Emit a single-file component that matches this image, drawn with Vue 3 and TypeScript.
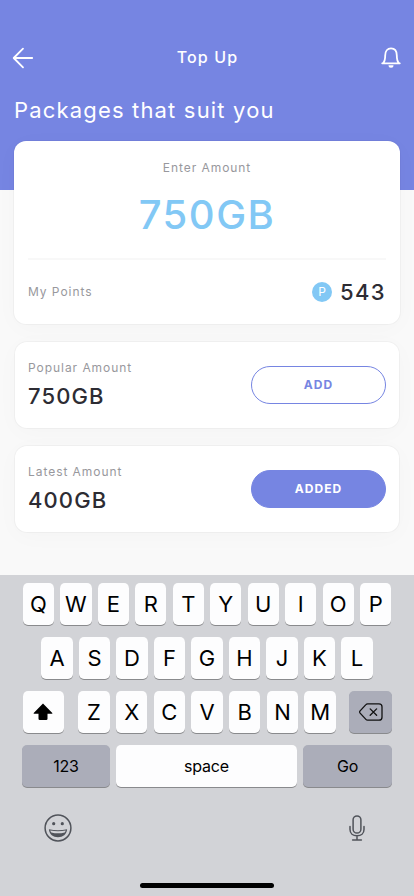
<script setup lang="ts">
interface Package {
  label: string
  amount: string
  added: boolean
}

const packages: Package[] = [
  { label: 'Popular Amount', amount: '750GB', added: false },
  { label: 'Latest Amount', amount: '400GB', added: true },
]

const topRow: string[] = 'QWERTYUIOP'.split('')
const homeRow: string[] = 'ASDFGHJKL'.split('')
const bottomRow: string[] = 'ZXCVBNM'.split('')
</script>

<template>
  <div class="screen">
    <header class="hero">
      <nav class="nav">
        <svg class="icon" width="22" height="22" viewBox="0 0 22 22">
          <path d="M11 1.600 1.700 11l9.300 9.400M1.800 11h18.400" fill="none" stroke="#fff" stroke-width="1.800" stroke-linecap="round" stroke-linejoin="round" />
        </svg>
        <h1 class="title">Top Up</h1>
        <svg class="icon bell" width="20" height="22" viewBox="0 0 20 22">
          <path d="M1.200 16.300h17.600M2 16.100c1.600-1.400 2.200-3.500 2.200-7.600C4.200 4 6.500 1.400 10 1.400S15.800 4 15.800 8.500c0 4.100.6 6.200 2.200 7.600" fill="none" stroke="#fff" stroke-width="1.800" stroke-linecap="round" stroke-linejoin="round" />
          <path d="M7.500 18.300h5a2.500 2.500 0 0 1-5 0z" fill="#fff" />
        </svg>
      </nav>
      <h2 class="headline">Packages that suit you</h2>
    </header>

    <main class="content">
      <section class="card balance">
        <div class="label enter">Enter Amount</div>
        <div class="amount">750GB</div>
        <div class="points">
          <span class="label">My Points</span>
          <span class="score"><i class="coin">P</i><b class="value">543</b></span>
        </div>
      </section>

      <section v-for="item in packages" :key="item.label" class="card package">
        <div>
          <div class="label">{{ item.label }}</div>
          <div class="value size">{{ item.amount }}</div>
        </div>
        <button class="action" :class="{ filled: item.added }">{{ item.added ? 'ADDED' : 'ADD' }}</button>
      </section>
    </main>

    <div class="keyboard">
      <div class="row">
        <span v-for="k in topRow" :key="k" class="key">{{ k }}</span>
      </div>
      <div class="row">
        <span v-for="k in homeRow" :key="k" class="key">{{ k }}</span>
      </div>
      <div class="row spread">
        <span class="key shift">
          <svg width="20" height="18" viewBox="0 0 20 18">
            <path d="M10 .6 19.300 10q.5.700-.4.700H14.500v5q0 1.300-1.300 1.300H6.800q-1.300 0-1.300-1.300v-5H1.100Q.2 10.700.7 10z" fill="#000" />
          </svg>
        </span>
        <div class="group">
          <span v-for="k in bottomRow" :key="k" class="key">{{ k }}</span>
        </div>
        <span class="key dark delete">
          <svg width="24" height="18" viewBox="0 0 24 18">
            <path d="M8.600.8H20q3 0 3 3v10.400q0 3-3 3H8.600q-1 0-1.700-.8L1.100 10.100q-.9-1.100 0-2.200L6.900 1.600Q7.600.8 8.600.8zM11.200 5.900l6.400 6.300M17.600 5.900l-6.400 6.300" fill="none" stroke="#111" stroke-width="1.300" stroke-linecap="round" stroke-linejoin="round" />
          </svg>
        </span>
      </div>
      <div class="row spread">
        <span class="key word dark digits">123</span>
        <span class="key word space">space</span>
        <span class="key word dark go">Go</span>
      </div>
      <div class="tools">
        <svg width="28" height="28" viewBox="0 0 28 28">
          <circle cx="14" cy="14" r="12.900" fill="none" stroke="#50535a" stroke-width="1.500" />
          <circle cx="9.700" cy="9.700" r="1.600" fill="#50535a" />
          <circle cx="18.300" cy="9.700" r="1.600" fill="#50535a" />
          <path d="M4.900 15.300q9.100 1.900 18.200 0c-.3 5-4.300 8-9.100 8s-8.800-3-9.100-8z" fill="#50535a" />
          <path d="M6.200 16.600q7.800 1.300 15.600 0-.3 1.100-1.100 1.800-6.700 1.900-13.400 0-.8-.7-1.100-1.800z" fill="#d2d3d7" />
        </svg>
        <svg width="16" height="26" viewBox="0 0 16 26">
          <rect x="4.100" y=".9" width="7.800" height="17.200" rx="3.900" fill="none" stroke="#50535a" stroke-width="1.500" />
          <path d="M1 11.500v3c0 4 3 6.300 7 6.300s7-2.300 7-6.300v-3M8 20.800v4M3.600 24.900h8.800" fill="none" stroke="#50535a" stroke-width="1.500" stroke-linecap="round" />
        </svg>
      </div>
      <div class="home"></div>
    </div>
  </div>
</template>

<style>
body {
  margin: 0;
}
</style>

<style scoped>
.screen {
  width: 414px;
  height: 896px;
  display: flex;
  flex-direction: column;
  overflow: hidden;
  background: #f9f9f9;
  font-family: Inter, 'Liberation Sans', sans-serif;
  color: #2d2c33;
}
.hero {
  flex: none;
  box-sizing: border-box;
  height: 190px;
  padding: 46px 13px 0 12px;
  background: #7685e2;
  color: #fff;
}
.nav {
  height: 24px;
  display: flex;
  align-items: center;
  justify-content: space-between;
}
.icon {
  display: block;
}
.title {
  margin: -2px 0 0;
  font-size: 16px;
  line-height: 24px;
  font-weight: 500;
  letter-spacing: 1.1px;
}
.headline {
  margin: 25px 0 0 2px;
  font-size: 22px;
  line-height: 30px;
  font-weight: 400;
  letter-spacing: 1.17px;
}
.content {
  flex: 1;
  display: flex;
  flex-direction: column;
  gap: 18px;
  margin-top: -49px;
  padding: 0 15px;
}
.card {
  box-sizing: border-box;
  border-radius: 12px;
  background: #fff;
  box-shadow: 0 0 0 1px rgba(0, 0, 0, 0.03), 0 4px 24px rgba(0, 0, 0, 0.025);
}
.balance {
  height: 183px;
  margin: 0 -1px;
  padding: 0 14px;
}
.label {
  font-size: 12px;
  line-height: 16px;
  letter-spacing: 0.95px;
  color: #98989d;
}
.enter {
  padding-top: 19px;
  text-align: center;
}
.amount {
  height: 82px;
  border-bottom: 2px solid #f8f8f8;
  font-size: 40px;
  line-height: 78px;
  font-weight: 500;
  letter-spacing: 1.5px;
  text-align: center;
  color: #82c8f5;
}
.points {
  height: 64px;
  display: flex;
  align-items: center;
  justify-content: space-between;
}
.score {
  display: flex;
  align-items: center;
  gap: 8px;
}
.coin {
  width: 20px;
  height: 20px;
  border-radius: 50%;
  background: #82c8f5;
  color: #fff;
  font-size: 12px;
  line-height: 20px;
  font-style: normal;
  font-weight: 400;
  text-align: center;
}
.value {
  font-size: 22px;
  line-height: 28px;
  font-weight: 500;
  letter-spacing: 1.4px;
}
.package {
  height: 86px;
  padding: 0 13px;
  display: flex;
  align-items: center;
  justify-content: space-between;
}
.size {
  margin: 6px 0 1px;
  letter-spacing: 1.1px;
}
.action {
  box-sizing: border-box;
  width: 135px;
  height: 38px;
  padding: 0;
  border: 1px solid #7685e2;
  border-radius: 19px;
  background: #fff;
  color: #7685e2;
  font: 700 12px/36px Inter, 'Liberation Sans', sans-serif;
  letter-spacing: 1.1px;
}
.filled {
  background: #7685e2;
  color: #fff;
}
.keyboard {
  flex: none;
  box-sizing: border-box;
  height: 321px;
  padding: 8px 22px 0;
  background: #d2d3d7;
  color: #000;
}
.row {
  display: flex;
  justify-content: center;
  gap: 6.1px;
  margin-bottom: 12px;
}
.spread {
  justify-content: space-between;
  gap: 0;
}
.group {
  display: flex;
  gap: 6.3px;
  margin-left: 1px;
}
.key {
  flex: none;
  width: 31.4px;
  height: 42px;
  display: flex;
  align-items: center;
  justify-content: center;
  border-radius: 5px;
  background: #fdfdfe;
  box-shadow: 0 1px 0 #898a8d;
  font-size: 22px;
}
.dark {
  background: #abadb9;
}
.shift {
  width: 41.5px;
  margin-left: 0.6px;
}
.delete {
  width: 43px;
}
.delete svg {
  margin-left: 1px;
}
.word {
  font-size: 16px;
  letter-spacing: -0.2px;
}
.digits {
  width: 88px;
}
.space {
  width: 181.6px;
}
.go {
  width: 89px;
}
.tools {
  display: flex;
  align-items: center;
  justify-content: space-between;
  margin-top: 27px;
  padding: 0 27px 0 22px;
}
.home {
  width: 134px;
  height: 5px;
  margin: 41px auto 0;
  border-radius: 3px;
  background: #000;
}
</style>
